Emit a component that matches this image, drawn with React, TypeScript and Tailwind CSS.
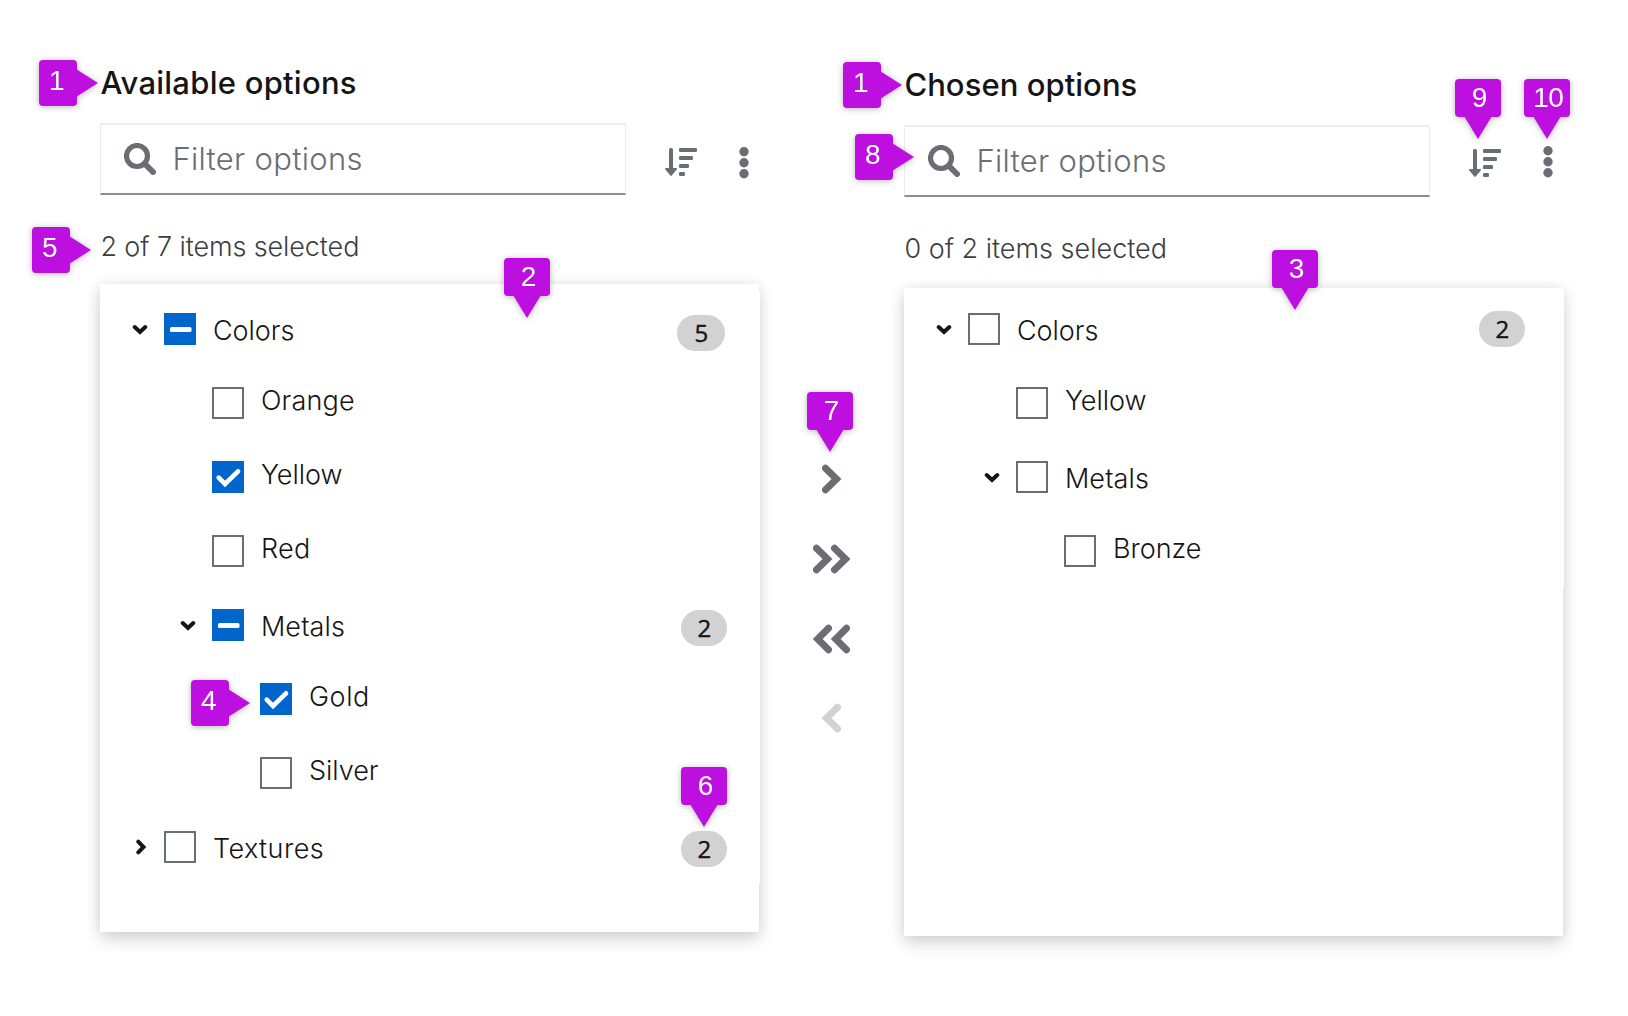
import { ReactNode } from "react";

type Check = "off" | "on" | "mixed";
type Item = {
  label: string;
  level: number;
  check: Check;
  toggle?: "open" | "closed";
  count?: number;
  badge?: string;
  tracking: string;
};

const available: Item[] = [
  { label: "Colors", level: 0, check: "mixed", toggle: "open", count: 5, badge: "w-12 right-[35px] top-[31px]", tracking: "tracking-[0px]" },
  { label: "Orange", level: 1, check: "off", tracking: "tracking-[0.2px]" },
  { label: "Yellow", level: 1, check: "on", tracking: "tracking-[0px]" },
  { label: "Red", level: 1, check: "off", tracking: "tracking-[0.3px]" },
  { label: "Metals", level: 1, check: "mixed", toggle: "open", count: 2, badge: "w-[46px] right-[33px] top-[30px]", tracking: "tracking-[0.15px]" },
  { label: "Gold", level: 2, check: "on", tracking: "tracking-[0.6px]" },
  { label: "Silver", level: 2, check: "off", tracking: "tracking-[0px]" },
  { label: "Textures", level: 0, check: "off", toggle: "closed", count: 2, badge: "w-[46px] right-[33px] top-[29px]", tracking: "tracking-[0.45px]" },
];

const chosen: Item[] = [
  { label: "Colors", level: 0, check: "off", toggle: "open", count: 2, badge: "w-[46px] right-[39px] top-[27px]", tracking: "tracking-[0px]" },
  { label: "Yellow", level: 1, check: "off", tracking: "tracking-[0px]" },
  { label: "Metals", level: 1, check: "off", toggle: "open", tracking: "tracking-[0.15px]" },
  { label: "Bronze", level: 2, check: "off", tracking: "tracking-[0px]" },
];

const indent = ["pl-8", "pl-20", "pl-32"];

function Checkbox({ state }: { state: Check }) {
  if (state === "off") return <span className="block h-8 w-8 border-2 border-[#6a6e73] bg-white" />;
  return (
    <span className="block h-8 w-8 bg-[#0066cc]">
      <svg viewBox="0 0 32 32" className="h-8 w-8" fill="none" stroke="#fff">
        {state === "mixed" ? (
          <rect x="6" y="14" width="21.5" height="5" rx="1.5" fill="#fff" stroke="none" />
        ) : (
          <path d="M6.700 16.700l6.300 6.300L26 10.300" strokeWidth="4.600" strokeLinecap="round" />
        )}
      </svg>
    </span>
  );
}

function Toggle({ open }: { open: boolean }) {
  return (
    <svg viewBox="0 0 16 16" className="h-4 w-4" fill="none" stroke="#151515" strokeWidth="4" strokeLinecap="round">
      <path d={open ? "M2.700 6L8 11l5.300-5" : "M6.300 2.700L11.500 8 6.300 13.300"} />
    </svg>
  );
}

function Row({ item }: { item: Item }) {
  return (
    <li className={`relative flex h-[74px] items-start pt-[29px] ${indent[item.level]}`}>
      <span className="mt-2 w-8 shrink-0">{item.toggle && <Toggle open={item.toggle === "open"} />}</span>
      <Checkbox state={item.check} />
      <span
        className={`ml-[16.5px] whitespace-nowrap text-[27px] leading-8 font-light text-[#151515] ${item.tracking} ${item.toggle ? "mt-[2px]" : "-mt-[2px]"}`}
      >
        {item.label}
      </span>
      {item.count !== undefined && (
        <span
          className={`absolute flex h-9 items-center justify-center rounded-full bg-[#d2d2d2] pb-px font-['Open_Sans',sans-serif] text-2xl font-medium text-[#151515] [-webkit-text-stroke:0.4px_#151515] ${item.badge}`}
        >
          {item.count}
        </span>
      )}
    </li>
  );
}

function SortIcon() {
  return (
    <svg viewBox="0 0 32 28" className="h-7 w-8" fill="#6a6e73">
      <rect x="4" y="0" width="4" height="23" rx="1.5" />
      <path d="M1 20h10c1 0 1.300.8.7 1.500l-5 6c-.4.500-1 .500-1.400 0l-5-6C-.3 20.800 0 20 1 20z" />
      <rect x="14" y="0" width="18" height="4" rx="1.2" />
      <rect x="14" y="8" width="14" height="4" rx="1.2" />
      <rect x="14" y="16" width="10" height="4" rx="1.2" />
      <rect x="14" y="24" width="6" height="4" rx="1.2" />
    </svg>
  );
}

function KebabIcon() {
  return (
    <svg viewBox="0 0 10 32" className="h-8 w-2.5" fill="#6a6e73">
      <circle cx="5" cy="4.700" r="4.700" />
      <circle cx="5" cy="15.700" r="4.700" />
      <circle cx="5" cy="26.700" r="4.700" />
    </svg>
  );
}

function SearchIcon() {
  return (
    <svg viewBox="0 0 32 32" className="h-8 w-8" fill="none" stroke="#6a6e73">
      <circle cx="13" cy="13" r="10.500" strokeWidth="5.200" />
      <path d="M21 21l8 8" strokeWidth="6" strokeLinecap="round" />
    </svg>
  );
}

function Pane({
  title,
  titleClass,
  status,
  statusClass,
  iconsClass,
  sortClass,
  cardGap,
  listPad,
  edge,
  items,
}: {
  title: string;
  titleClass: string;
  status: string;
  statusClass: string;
  iconsClass: string;
  sortClass: string;
  cardGap: string;
  listPad: string;
  edge: ReactNode;
  items: Item[];
}) {
  return (
    <section className="flex w-[660px] flex-col">
      <h2 className={`h-10 whitespace-nowrap text-[31px] leading-10 font-medium text-[#151515] ${titleClass}`}>{title}</h2>
      <div className="mt-5 flex">
        <div className="flex h-[72px] w-[526px] items-center border border-t-2 border-b-2 border-[#ededed] border-b-[#8a8d90] pl-[23px]">
          <SearchIcon />
          <span className="ml-4 whitespace-nowrap text-[31px] leading-9 font-light tracking-[0.3px] text-[#6a6e73]">
            Filter options
          </span>
        </div>
        <div className={`ml-[39px] flex items-start gap-[42px] ${iconsClass}`}>
          <span className={sortClass}>
            <SortIcon />
          </span>
          <KebabIcon />
        </div>
      </div>
      <p className={`mt-8 h-10 whitespace-nowrap text-[27px] leading-10 font-light text-[#3c3f42] ${statusClass}`}>{status}</p>
      <div className={`relative h-[648px] w-[659px] bg-white shadow-[0_8px_16px_rgba(3,3,3,0.14),0_0_12px_rgba(3,3,3,0.09)] ${cardGap}`}>
        {edge}
        <ul className={`relative w-[660px] ${listPad}`}>
          {items.map((item) => (
            <Row key={item.label} item={item} />
          ))}
        </ul>
      </div>
    </section>
  );
}

function Arrow({ d, wide, color }: { d: string; wide?: boolean; color: string }) {
  return (
    <svg viewBox={wide ? "0 0 38 30" : "0 0 20 30"} className={wide ? "h-[30px] w-[38px]" : "h-[30px] w-5"} fill="none" stroke={color} strokeWidth="7">
      <path d={d} strokeLinecap="round" />
    </svg>
  );
}

function RightMarker({ n, place }: { n: number; place: string }) {
  return (
    <div className={`absolute flex items-center drop-shadow-[0_1px_3px_rgba(0,0,0,0.28)] ${place}`}>
      <span className="flex h-[46px] w-[38px] items-center justify-center rounded-[4px] bg-[#bd10e0] pr-[3px] pb-[4px] font-['Liberation_Sans',sans-serif] text-[28px] leading-8 text-white">
        {n}
      </span>
      <svg viewBox="0 0 22 28" className="-ml-px h-7 w-[22px]" fill="#bd10e0">
        <path d="M0 0L22 14 0 28z" />
      </svg>
    </div>
  );
}

function DownMarker({ n, place }: { n: number; place: string }) {
  return (
    <div className={`absolute flex flex-col items-center drop-shadow-[0_1px_3px_rgba(0,0,0,0.28)] ${place}`}>
      <span className="flex h-[38px] w-[46px] items-center justify-center rounded-[4px] bg-[#bd10e0] pl-[2px] font-['Liberation_Sans',sans-serif] text-[28px] leading-8 tracking-[-0.5px] text-white">
        {n}
      </span>
      <svg viewBox="0 0 28 23" className="-mt-px h-[23px] w-7" fill="#bd10e0">
        <path d="M0 0L14 23 28 0z" />
      </svg>
    </div>
  );
}

export default function App() {
  return (
    <main className="relative flex h-[1016px] w-[1628px] overflow-hidden bg-white pl-[100.4px] font-['Inter',sans-serif]">
      <div className="pt-[63px]">
        <Pane
          title="Available options"
          titleClass="tracking-[0.25px]"
          status="2 of 7 items selected"
          statusClass="tracking-[-0.1px]"
          iconsClass="pt-6"
          sortClass="mt-px"
          cardGap="mt-[17px]"
          listPad=""
          edge={<div className="absolute top-2 left-0 h-[592px] w-[660px] bg-white" />}
          items={available}
        />
      </div>
      <div className="flex w-[144px] flex-col items-center gap-[50px] pt-[464px]">
        <Arrow color="#6a6e73" d="M3.500 4.200L14.500 15 3.500 25.800" />
        <Arrow wide color="#6a6e73" d="M3.500 4.200L14.500 15 3.500 25.800M21.500 4.200L32.500 15 21.500 25.800" />
        <Arrow wide color="#6a6e73" d="M15.500 4.200L4.700 15l10.800 10.800M33.500 4.200L22.700 15l10.800 10.800" />
        <span className="-mt-px">
          <Arrow color="#d2d2d2" d="M15.500 4.200L4.500 15l11 10.800" />
        </span>
      </div>
      <div className="pt-[65px]">
        <Pane
          title="Chosen options"
          titleClass="tracking-[0.05px]"
          status="0 of 2 items selected"
          statusClass="tracking-[0px]"
          iconsClass="pt-[21px]"
          sortClass="mt-[3px]"
          cardGap="mt-[19px]"
          listPad="-top-1"
          edge={<div className="absolute top-1 left-0 h-[296px] w-[660px] bg-white" />}
          items={chosen}
        />
      </div>

      <RightMarker n={1} place="left-[39.300px] top-[60px]" />
      <RightMarker n={5} place="left-[32.300px] top-[227px]" />
      <RightMarker n={1} place="left-[843.300px] top-[62px]" />
      <RightMarker n={8} place="left-[855.300px] top-[134px]" />
      <RightMarker n={4} place="left-[191.300px] top-[680px]" />
      <DownMarker n={2} place="left-[504.300px] top-[258px]" />
      <DownMarker n={3} place="left-[1272.300px] top-[250px]" />
      <DownMarker n={6} place="left-[681.300px] top-[767px]" />
      <DownMarker n={7} place="left-[807.300px] top-[392px]" />
      <DownMarker n={9} place="left-[1455.300px] top-[79px]" />
      <DownMarker n={10} place="left-[1524.300px] top-[79px]" />
    </main>
  );
}
